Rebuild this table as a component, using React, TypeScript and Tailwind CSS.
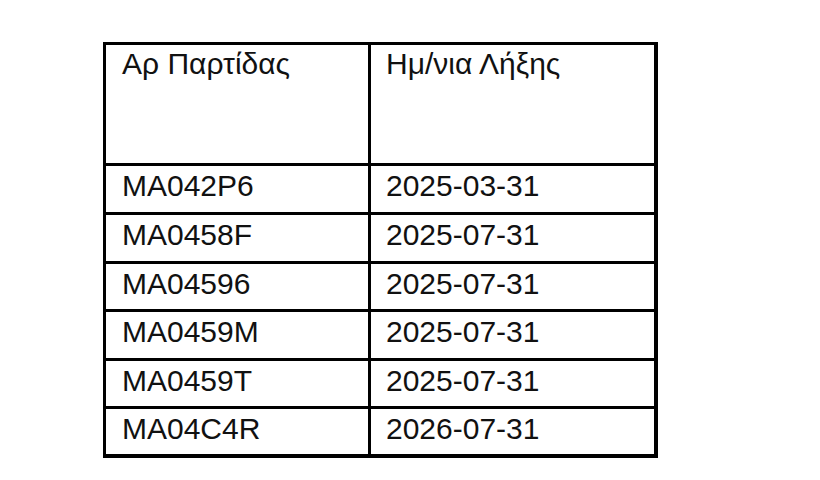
const rows = [
  { lot: 'MA042P6', expiry: '2025-03-31', h: 'h-[49px]' },
  { lot: 'MA0458F', expiry: '2025-07-31', h: 'h-[49px]' },
  { lot: 'MA04596', expiry: '2025-07-31', h: 'h-[48px]' },
  { lot: 'MA0459M', expiry: '2025-07-31', h: 'h-[49px]' },
  { lot: 'MA0459T', expiry: '2025-07-31', h: 'h-[48px]' },
  { lot: 'MA04C4R', expiry: '2026-07-31', h: 'h-[48px]' },
];

export default function App() {
  return (
    <div className="w-[820px] h-[480px] bg-white overflow-hidden pt-[42px] pl-[103px] font-['Liberation_Sans',Arial,sans-serif] text-[30px] leading-[34px] text-[#111]">
      <div className="w-[555px] border-black border-t-[3px] border-l-[3px] border-r-[4px] border-b-[4px]">
        {/* Header */}
        <div className="flex h-[118px]">
          <div className="w-[262px] pl-[16px] pt-[2px]">Αρ Παρτίδας</div>
          <div className="flex-1 border-l-[3px] border-black pl-[15px] pt-[2px]">Ημ/νια Λήξης</div>
        </div>

        {/* Rows */}
        {rows.map((r) => (
          <div key={r.lot} className={`flex border-t-[3px] border-black ${r.h}`}>
            <div className="w-[262px] pl-[16px] pt-[3px]">{r.lot}</div>
            <div className="flex-1 border-l-[3px] border-black pl-[15px] pt-[3px]">{r.expiry}</div>
          </div>
        ))}
      </div>
    </div>
  );
}
